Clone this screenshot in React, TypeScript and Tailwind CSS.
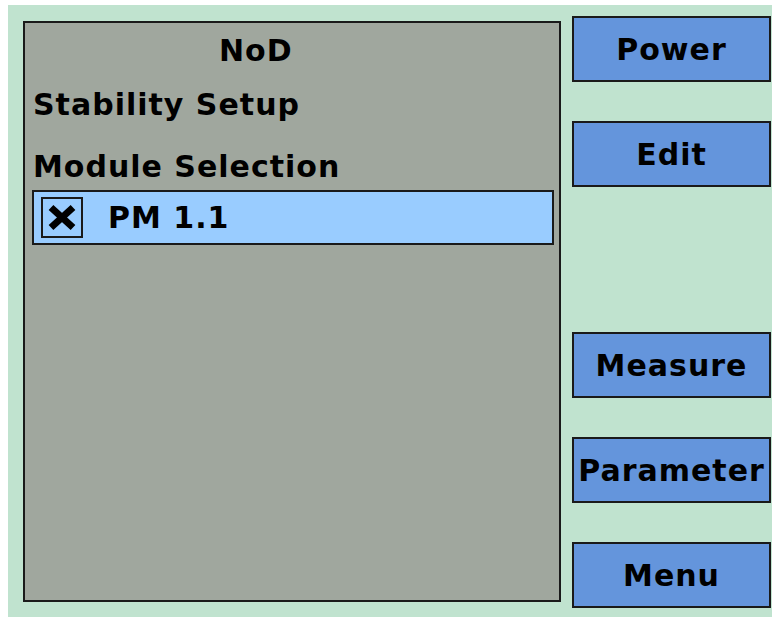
import React from 'react'

const font = { fontFamily: '"DejaVu Sans", Verdana, sans-serif' }

const SideButton = ({ label, className }: { label: string; className?: string }) => (
  <div
    className={
      'flex h-[66px] w-[199px] items-center justify-center border-2 border-[#1a1a1a] bg-[#6495dc] text-[30px] font-bold leading-[35px] tracking-[1px] text-black ' +
      (className || '')
    }
  >
    {label}
  </div>
)

const App = () => {
  return (
    <div className="h-[617px] w-[772px] overflow-hidden bg-white pl-[8px] pt-[5px]" style={font}>
      <div className="flex h-full w-full bg-[#c0e3cf]">
        {/* main panel */}
        <div className="ml-[15px] mt-[16px] flex h-[581px] w-[538px] flex-col border-2 border-[#1a1a1a] bg-[#a0a79e] text-[30px] font-bold leading-[35px] tracking-[1px] text-black">
          <div className="ml-[194px] mt-[10px]">NoD</div>
          <div className="ml-[8px] mt-[19px]">Stability Setup</div>
          <div className="ml-[8px] mt-[27px]">Module Selection</div>

          <div className="ml-[7px] mt-[6px] flex h-[55px] w-[522px] items-center border-2 border-[#1a1a1a] bg-[#99ccff]">
            <div className="ml-[7px] flex h-[41px] w-[42px] items-center justify-center border-2 border-[#1a1a1a]">
              <svg width="30" height="27" viewBox="0 0 30 27">
                <path d="M4 3.5 L26 23.5 M26 3.5 L4 23.5" stroke="#000" strokeWidth="7" strokeLinecap="butt" />
              </svg>
            </div>
            <span className="ml-[25px]">PM 1.1</span>
          </div>
        </div>

        {/* side buttons */}
        <div className="ml-[11px] mt-[11px] flex flex-col">
          <SideButton label="Power" />
          <SideButton label="Edit" className="mt-[39px]" />
          <SideButton label="Measure" className="mt-[145px]" />
          <SideButton label="Parameter" className="mt-[39px]" />
          <SideButton label="Menu" className="mt-[39px]" />
        </div>
      </div>
    </div>
  )
}

export default App
